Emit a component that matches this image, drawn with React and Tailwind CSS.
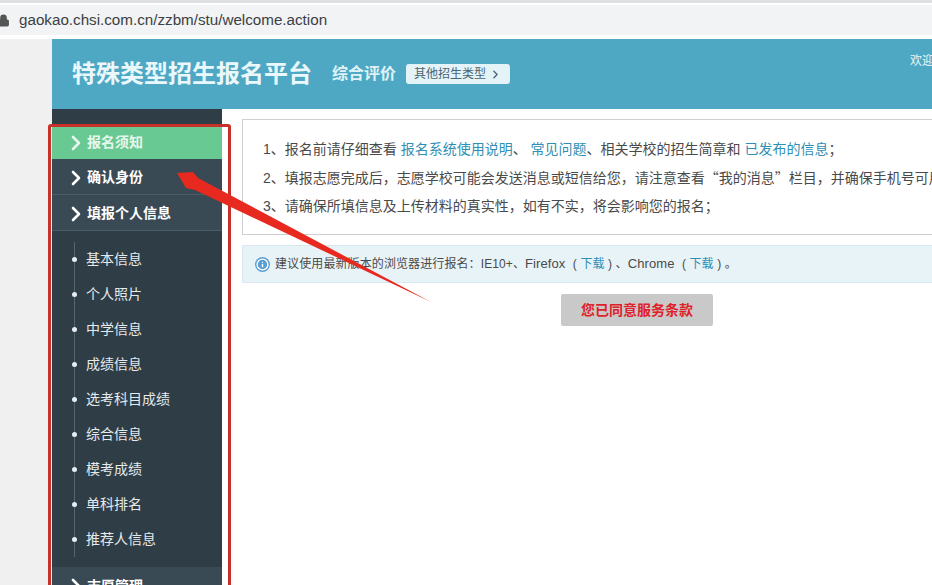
import { ChevronRight, Lock, Info } from 'lucide-react';

const subItems = ['基本信息', '个人照片', '中学信息', '成绩信息', '选考科目成绩', '综合信息', '模考成绩', '单科排名', '推荐人信息'];

function SideHead({ label, active, last }) {
  return (
    <div
      className={`flex items-center pl-[12px] text-[14px] font-bold ${
        active ? 'h-8 bg-[#68c992] pb-[1px] text-[#e8f7ee]' : 'h-9 border-b border-[#4d5d68] bg-[#3a4a55] pt-[2px] text-white'
      } ${last ? 'border-b-0' : ''}`}
    >
      <ChevronRight className="-mr-[1px] h-6 w-6 shrink-0" strokeWidth={2.6} />
      {label}
    </div>
  );
}

export default function App() {
  return (
    <div className="relative h-[585px] w-[932px] overflow-hidden bg-white font-['Liberation_Sans','Noto_Sans_CJK_SC',sans-serif] text-[#4a4a4a]">
      <div className="h-[3px] bg-[#dedfe0]" />
      <div className="mt-[2px] flex h-[30px] items-center bg-[#f1f3f4] text-[15.2px] text-[#3c4043]">
        <Lock className="-ml-[3px] mr-[9px] h-[13px] w-[13px] fill-[#555] text-[#555]" />
        gaokao.chsi.com.cn/zzbm/stu/welcome.action
      </div>
      <div className="h-1 bg-white" />

      <div className="flex h-[546px]">
        <div className="w-[52px] shrink-0 bg-[#f0f0f0]" />
        <div className="min-w-0 flex-1">
          <header className="flex h-[70px] items-center bg-[#4fa8c3] pl-5 text-white">
            <h1 className="text-[24px] font-bold text-[#eaf8fb]">特殊类型招生报名平台</h1>
            <span className="ml-[20px] text-[16px] font-bold text-[#dff3f7]">综合评价</span>
            <span className="ml-[10px] flex h-[20px] w-[104px] items-center justify-center rounded-[3px] bg-[#e3f3f8] text-[12px] text-[#4a6672]">
              其他招生类型
              <ChevronRight className="ml-[3px] h-[13px] w-[13px]" strokeWidth={2.5} />
            </span>
            <span className="mb-[26px] ml-auto w-[22px] overflow-hidden whitespace-nowrap text-[12px] text-[#e8f6f9]">欢迎您</span>
          </header>

          <div className="flex">
            <aside className="h-[476px] w-[170px] shrink-0 bg-[#2f3d46] pt-[18px]">
              <SideHead label="报名须知" active />
              <SideHead label="确认身份" />
              <SideHead label="填报个人信息" />
              <div className="pb-[10px] pl-[22px] pt-[11px]">
                <ul className="border-l border-[#56656e]">
                  {subItems.map((item) => (
                    <li key={item} className="relative flex h-[35px] items-center pl-[11px] text-[14px] text-[#e6eaec]">
                      <span className="absolute -left-[3px] h-[5px] w-[5px] rounded-full bg-[#e6eef2]" />
                      {item}
                    </li>
                  ))}
                </ul>
              </div>
              <SideHead label="志愿管理" last />
            </aside>

            <main className="min-w-0 flex-1 overflow-hidden pl-5 pt-[10px]">
              <section className="flex h-[116px] w-[720px] flex-col justify-center gap-[6px] whitespace-nowrap border border-[#cfcfcf] pl-5 text-[14px] leading-[22px]">
                <p>
                  1、报名前请仔细查看 <a className="text-[#2f8fb5]">报名系统使用说明</a>、 <a className="text-[#2f8fb5]">常见问题</a>、相关学校的招生简章和 <a className="text-[#2f8fb5]">已发布的信息</a>；
                </p>
                <p>
                  2、填报志愿完成后，志愿学校可能会发送消息或短信给您，请注意查看<span className="font-['Noto_Sans_CJK_SC',sans-serif]">“</span>我的消息<span className="font-['Noto_Sans_CJK_SC',sans-serif]">”</span>栏目，并确保手机号可用；
                </p>
                <p>3、请确保所填信息及上传材料的真实性，如有不实，将会影响您的报名；</p>
              </section>

              <div className="mt-[10px] flex h-[38px] w-[720px] items-center whitespace-nowrap border border-[#d8e8ef] bg-[#e8f3f8] pl-3 text-[12px] tracking-[0.1px]">
                <span className="mr-[5px] flex h-[15px] w-[15px] items-center justify-center rounded-full bg-[#5a9fd4] text-white">
                  <Info className="h-[13px] w-[13px]" strokeWidth={2.5} />
                </span>
                建议使用最新版本的浏览器进行报名：IE10+、<span className="text-[13px]">Firefox</span>
                <span className="ml-1">&nbsp;(&nbsp;</span>
                <a className="text-[#2f8fb5]">下载</a>&nbsp;)&nbsp;、<span className="text-[13px]">Chrome</span>
                <span className="ml-1">&nbsp;(&nbsp;</span>
                <a className="text-[#2f8fb5]">下载</a>&nbsp;)&nbsp;。
              </div>

              <div className="ml-[319px] mt-[11px] flex h-8 w-[152px] items-center justify-center rounded-[2px] bg-[#c9c9c9] text-[14px] font-bold text-[#e0202a]">
                您已同意服务条款
              </div>
            </main>
          </div>
        </div>
      </div>

      {/* annotation drawn over the screenshot */}
      <div className="absolute left-[48px] top-[124px] h-[470px] w-[183px] rounded-[3px] border-[3px] border-[#c8302a]" />
      <svg className="absolute left-0 top-0" width="932" height="585" viewBox="0 0 932 585">
        <polygon points="177,173 193,172 198,178 431,302 195,190 186,188" fill="#e8291f" />
      </svg>
    </div>
  );
}
